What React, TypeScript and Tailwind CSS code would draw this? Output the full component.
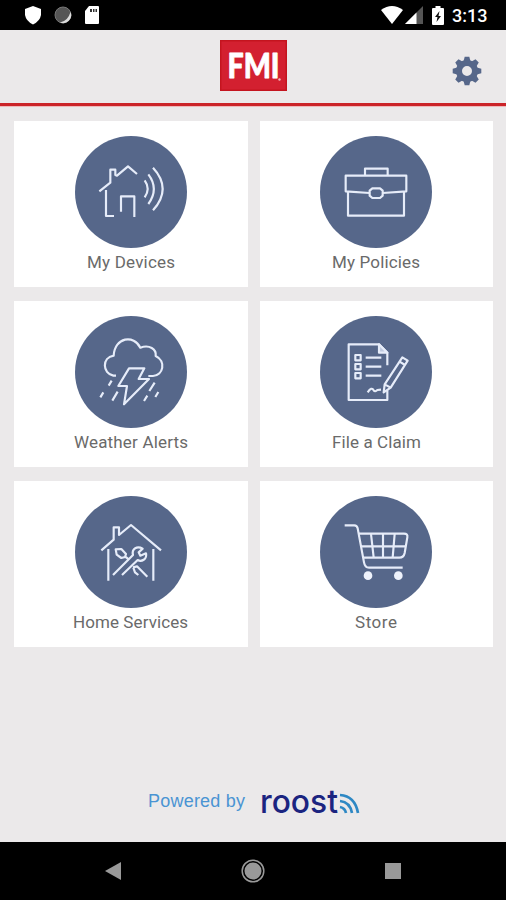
import type { ReactNode } from "react";

// Every tile icon is drawn on a 336 unit square, three units to a pixel
function TileIcon({ viewBox, children }: { viewBox: string; children: ReactNode }) {
  return (
    <svg
      viewBox={viewBox}
      className="size-28 rounded-full bg-[#56678a]"
      fill="none"
      stroke="#e6ecf9"
      strokeWidth="6.5"
      strokeLinejoin="round"
    >
      {children}
    </svg>
  );
}

const tiles = [
  {
    label: "My Devices",
    width: "w-[88px]",
    icon: (
      <TileIcon viewBox="45 48 336 336">
        <path d="M118 214 L151 188 V149 H166 V165 L171 167 L204 139 L231 162" />
        <path d="M138 210 V288 H162 M183 275 V229 H223 V291" />
        <path d="M254 181 Q272 206 254 232 M265 163 Q298 206 265 252 M279 143 Q337 206 279 271" />
      </TileIcon>
    ),
  },
  {
    label: "My Policies",
    width: "w-[88px]",
    icon: (
      <TileIcon viewBox="46 48 336 336">
        <path d="M181 166 V146 H249 V166" />
        <path d="M195 219 L123 214 V167 H305 V214 L234 219" />
        <path d="M130 215 V287 H298 V215" />
        <path d="M203 205 H226 L234 212 V227 L226 234 H203 L195 227 V212 Z" />
      </TileIcon>
    ),
  },
  {
    label: "Weather Alerts",
    width: "w-[114px]",
    icon: (
      <TileIcon viewBox="45 33 336 336">
        <path d="M168 212 H160 C127 205 125 158 161 152 C164 96 222 88 241 128 C268 118 290 132 287 153 C320 168 309 213 279 213 H265" />
        <path d="M207 190 H253 L236 222 H267 L192 298 L201 243 H175 Z" />
        <path d="M155 227 L146 242 M130 262 L121 277 M173 260 L157 287 M284 233 L268 258 M262 272 L252 288 M295 261 L286 276" />
      </TileIcon>
    ),
  },
  {
    label: "File a Claim",
    width: "w-[89px]",
    icon: (
      <TileIcon viewBox="46 33 336 336">
        <path d="M248 181 V143 L223 118 H132 V285 H248 V256" />
        <path d="M223 118 V143 H248 Z" fill="#bfc9df" />
        <path d="M152 150 H168 V166 H152 Z M152 177 H168 V193 H152 Z M152 204 H168 V220 H152 Z" />
        <path d="M183 158 H230 M183 185 H230 M183 212 H230" />
        <path d="M189 262 Q201 244 207 256 Q211 262 218 255 L229 254" />
        <path d="M293 157 L309 167 L258 248 L237 262 L240 238 Z M285 170 L301 180 M240 238 L258 248" />
      </TileIcon>
    ),
  },
  {
    label: "Home Services",
    width: "w-[115px]",
    icon: (
      <TileIcon viewBox="45 33 336 336">
        <path d="M124 196 L161 164 V127 H177 V150 L213 120 L303 196" />
        <path d="M145 192 V287 M280 192 V287" />
        <path d="M167 193 L184 192 L198 207 L195 216 L184 219 L170 209 Z M195 214 L207 224" />
        <path d="M159 270 L219 210 C214 190 232 182 248 191 L236 202 L241 212 L258 205 C262 224 244 231 233 225 L186 270" />
        <path d="M219 247 L231 244 L262 275 M220 248 L225 262 L235 270" />
      </TileIcon>
    ),
  },
  {
    label: "Store",
    width: "w-[42px]",
    icon: (
      <TileIcon viewBox="46 33 336 336">
        <path d="M120 121 H149 Q157 121 159 130 L178 232 Q181 248 193 248 H294" />
        <path d="M163 146 H298 Q310 146 308 157 L300 204 Q297 218 284 218 H176" />
        <path d="M169 184 H304 M199 147 L207 217 M235 147 V217 M270 147 L264 217" />
        <circle cx="190" cy="272" r="13" fill="#eef2fb" stroke="none" />
        <circle cx="281" cy="272" r="13" fill="#eef2fb" stroke="none" />
      </TileIcon>
    ),
  },
];

function StatusBar() {
  return (
    <div className="flex h-[30px] items-center justify-between bg-black pr-[18px] pl-6">
      <div className="flex items-center gap-3">
        <svg viewBox="0 0 18 20" className="h-5 w-[18px]" fill="#fff">
          <path d="M9 1 L17 4 V10 Q16 16 9 19.5 Q2 16 1 10 V4 Z" />
        </svg>
        <svg viewBox="0 0 18 18" className="size-[18px]">
          <circle cx="9" cy="9" r="8" fill="#555" stroke="#777" />
          <path d="M16.5 6 A8 8 0 0 1 6 16.5 Q14 15 16.5 6" fill="#ddd" />
        </svg>
        <svg viewBox="0 0 16 20" className="h-5 w-4">
          <path d="M5 1 H14 Q15 1 15 2 V18 Q15 19 14 19 H2 Q1 19 1 18 V6 Z" fill="#fff" />
          <path d="M6 4 H8 V7 H6 Z M9 4 H10.5 V7 H9 Z M11.5 4 H13 V7 H11.5 Z" fill="#333" />
        </svg>
      </div>
      <div className="flex items-center">
        <svg viewBox="0 0 22 18" className="h-[18px] w-[22px]" fill="#fff">
          <path d="M0 4 Q11 -4 22 4 L11 18 Z" />
        </svg>
        <svg viewBox="0 0 18 18" className="ml-[2px] size-[18px]">
          <path d="M18 0 V18 H0 Z" fill="#555" />
          <path d="M11.5 6.5 V18 H0 Z" fill="#fff" />
        </svg>
        <svg viewBox="0 0 12 19" className="ml-[9px] h-[19px] w-3">
          <path d="M3.5 0 H8.5 V2 H11 Q12 2 12 3 V18 Q12 19 11 19 H1 Q0 19 0 18 V3 Q0 2 1 2 H3.5 Z" fill="#fff" />
          <path d="M7.5 5 L3 11 H5.5 L4.5 16 L9 10 H6.5 Z" fill="#111" />
        </svg>
        <span className="mt-px ml-2 w-[36px] text-[18px] leading-none font-medium whitespace-nowrap text-white">
          3:13
        </span>
      </div>
    </div>
  );
}

function Header() {
  return (
    <header className="grid h-[76px] grid-cols-3 items-center border-b-3 border-[#cb2429] shadow-[0_1px_0_#efb9bb]">
      <svg viewBox="0 0 67 51" className="col-start-2 mb-[3px] ml-px h-[51px] w-[67px] justify-self-center overflow-visible">
        <rect width="67" height="51" fill="#c4141f" />
        <rect x="1.5" y="1.5" width="64" height="48" fill="#d32030" />
        <text
          x="7.5"
          y="37.5"
          fontFamily="Lato"
          fontWeight="900"
          fontSize="34"
          textLength="52"
          lengthAdjust="spacingAndGlyphs"
          fill="#fff"
          stroke="#fff"
          strokeWidth="0.8"
          strokeLinejoin="round"
        >
          FMI
        </text>
        <circle cx="59.5" cy="39.5" r="1.2" fill="#f3b7bb" />
      </svg>
      <svg viewBox="-15 -15 30 30" className="mt-2 mr-6 size-[30px] justify-self-end">
        <circle r="8" fill="none" stroke="#56678a" strokeWidth="6" />
        {[0, 45, 90, 135, 180, 225, 270, 315].map((angle) => (
          <path key={angle} d="M-3.7 -9 L-2.3 -14.3 H2.3 L3.7 -9 Z" fill="#56678a" transform={`rotate(${angle})`} />
        ))}
      </svg>
    </header>
  );
}

export default function App() {
  return (
    <div className="flex h-[900px] w-[506px] flex-col overflow-hidden bg-[#ebe9ea] font-['Roboto',sans-serif]">
      <StatusBar />
      <Header />

      <main className="grid grid-cols-2 gap-x-3 gap-y-[14px] pt-[15px] pr-[13px] pl-[14px]">
        {tiles.map((tile) => (
          <button key={tile.label} className="flex h-[166px] flex-col items-center bg-white pt-[15px]">
            {tile.icon}
            <svg className={`mt-[3px] h-6 ${tile.width} overflow-visible`}>
              <text x="0" y="17" fontSize="17" textLength="100%" fill="#6a6a6a">
                {tile.label}
              </text>
            </svg>
          </button>
        ))}
      </main>

      <footer className="mt-auto flex h-[76px] items-start pl-[148px]">
        <svg className="mt-[22px] h-7 w-[98px]">
          <text x="0" y="19" fontFamily="Liberation Sans" fontSize="18" textLength="97" fill="#4a94d3">
            Powered by
          </text>
        </svg>
        <svg viewBox="0 0 100 34" className="mt-[17px] ml-[14px] h-[34px] w-[100px] overflow-visible">
          <text
            x="0"
            y="30"
            fontFamily="Inter"
            fontWeight="500"
            fontSize="33"
            textLength="78"
            lengthAdjust="spacingAndGlyphs"
            fill="#1b2480"
          >
            roost
          </text>
          <g fill="none" stroke="#2e88c4" strokeWidth="2.7">
            <path d="M80 12 Q95 13 98 30" />
            <path d="M80 18 Q90 19 92 30" />
            <path d="M80 24 Q85 25 86 30" />
          </g>
        </svg>
      </footer>

      <nav className="flex h-[58px] items-center justify-between bg-black pr-[105px] pl-[105px]">
        <svg viewBox="0 0 16 18" className="h-[18px] w-4" fill="#999">
          <path d="M16 0 V18 L0 9 Z" />
        </svg>
        <svg viewBox="0 0 24 24" className="size-6">
          <circle cx="12" cy="12" r="8.5" fill="#999" />
          <circle cx="12" cy="12" r="10.8" fill="none" stroke="#999" strokeWidth="1.5" />
        </svg>
        <div className="size-4 bg-[#999]" />
      </nav>
    </div>
  );
}
